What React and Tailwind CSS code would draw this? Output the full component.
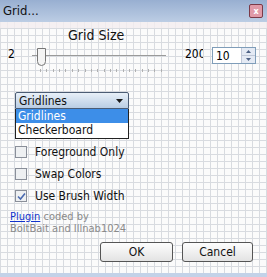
import React from "react";

const grid =
  "bg-[#fbfbfb] bg-[linear-gradient(to_right,#d8dbe0_1px,transparent_1px),linear-gradient(to_bottom,#d8dbe0_1px,transparent_1px)] bg-[size:7px_7px]";

const font = { fontFamily: "'DejaVu Sans Condensed', 'DejaVu Sans', sans-serif" };

function Check({ checked, label }) {
  return (
    <div className="flex items-center h-[22px]">
      <div className="w-[12px] h-[12px] border border-[#8a8f99] bg-[#eef0f2] flex items-center justify-center">
        {checked && (
          <svg width="9" height="9" viewBox="0 0 9 9">
            <path d="M1 4.5 L3.5 7 L8 1.5" stroke="#4a6ab0" strokeWidth="1.6" fill="none" />
          </svg>
        )}
      </div>
      <span className="ml-[8px] text-[12px] text-[#111]">{label}</span>
    </div>
  );
}

export default function App() {
  const ticks = Array.from({ length: 20 }, (_, i) => i);
  return (
    <div className={`w-[267px] h-[277px] overflow-hidden flex flex-col ${grid}`} style={font}>
      {/* title bar */}
      <div className="h-[22px] shrink-0 flex items-center justify-between pl-[3px] pr-[4px] bg-[linear-gradient(to_bottom,#98afd1,#bccde4)]">
        <span className="text-[13px] text-[#111]">Grid...</span>
        <div className="w-[14px] h-[14px] rounded-[2px] border border-[#7a3a48] bg-[#e09aa8] flex items-center justify-center text-[9px] font-bold text-white leading-none">
          x
        </div>
      </div>
      <div className="h-[6px] shrink-0 bg-[#f4eef0]/80" />

      {/* grid size */}
      <div className="h-[15px] leading-[15px] text-[14px] text-[#111] pl-[68px]">Grid Size</div>
      <div className="flex items-start h-[28px] mt-[4px] pl-[8px]">
        <span className="w-[6px] text-[12px] leading-[12px] mt-[1px]">2</span>
        <div className="relative w-[134px] h-[28px] ml-[18px]">
          <div className="absolute left-0 right-0 top-[8px] h-[1px] bg-[#9a9a9a]" />
          <div className="absolute left-[5px] top-[1px] w-[9px] h-[18px] border border-[#777] bg-[#f4f4f4] rounded-b-[5px]" />
          <div className="absolute left-[8px] right-[4px] top-[22px] flex justify-between">
            {ticks.map((t) => (
              <div key={t} className="w-[1px] h-[3px] bg-[#b0b0b0]" />
            ))}
          </div>
        </div>
        <span className="text-[12px] leading-[12px] mt-[1px] ml-[19px] w-[18px] overflow-hidden whitespace-nowrap">200</span>
        <div className="ml-[9px] w-[44px] h-[17px] border border-[#7f9db9] bg-white flex items-center">
          <span className="text-[12px] pl-[3px] flex-1">10</span>
          <div className="w-[14px] h-full flex flex-col border-l border-[#c0c8d8]">
            <div className="flex-1 flex items-center justify-center bg-[#e4eaf4] border-b border-[#c0c8d8]">
              <svg width="5" height="3"><path d="M0 3 L2.5 0 L5 3Z" fill="#4d6185" /></svg>
            </div>
            <div className="flex-1 flex items-center justify-center bg-[#e4eaf4]">
              <svg width="5" height="3"><path d="M0 0 L2.5 3 L5 0Z" fill="#4d6185" /></svg>
            </div>
          </div>
        </div>
      </div>

      {/* dropdown */}
      <div className="ml-[15px] mt-[17px] w-[114px]">
        <div className="h-[17px] border border-[#4b5c74] rounded-t-[2px] bg-[linear-gradient(to_bottom,#e8f0f8,#b9cde4)] flex items-center justify-between pl-[3px] pr-[5px]">
          <span className="text-[12px] text-[#111]">Gridlines</span>
          <svg width="7" height="4"><path d="M0 0 L7 0 L3.5 4Z" fill="#1a1a1a" /></svg>
        </div>
        <div className="border border-[#222] border-t-0 bg-white">
          <div className="h-[14px] bg-[#3d8ee8] text-white text-[12px] leading-[14px] pl-[2px]">Gridlines</div>
          <div className="h-[15px] text-[#111] text-[12px] leading-[15px] pl-[2px]">Checkerboard</div>
        </div>
      </div>

      {/* options */}
      <div className="ml-[15px] mt-[2px] flex flex-col">
        <Check label="Foreground Only" />
        <Check label="Swap Colors" />
        <Check checked label="Use Brush Width" />
      </div>

      <div className="ml-[10px] mt-[4px] text-[11px] leading-[12px]">
        <div>
          <span className="text-[#1133cc] underline">Plugin</span>
          <span className="text-[#8a8a8a]"> coded by</span>
        </div>
        <div className="text-[#8a8a8a]">BoltBait and Illnab1024</div>
      </div>

      {/* buttons */}
      <div className="flex justify-end gap-[9px] pr-[14px] mt-[7px]">
        <button className="w-[73px] h-[20px] border border-[#555] rounded-[3px] bg-[linear-gradient(to_bottom,#fdfdfd,#e3e3e3)] text-[12px] text-[#111]">
          OK
        </button>
        <button className="w-[71px] h-[20px] border border-[#555] rounded-[3px] bg-[linear-gradient(to_bottom,#fdfdfd,#e3e3e3)] text-[12px] text-[#111]">
          Cancel
        </button>
      </div>

      <div className="mt-auto h-[4px] shrink-0 bg-[#c3d2e8]" />
    </div>
  );
}
